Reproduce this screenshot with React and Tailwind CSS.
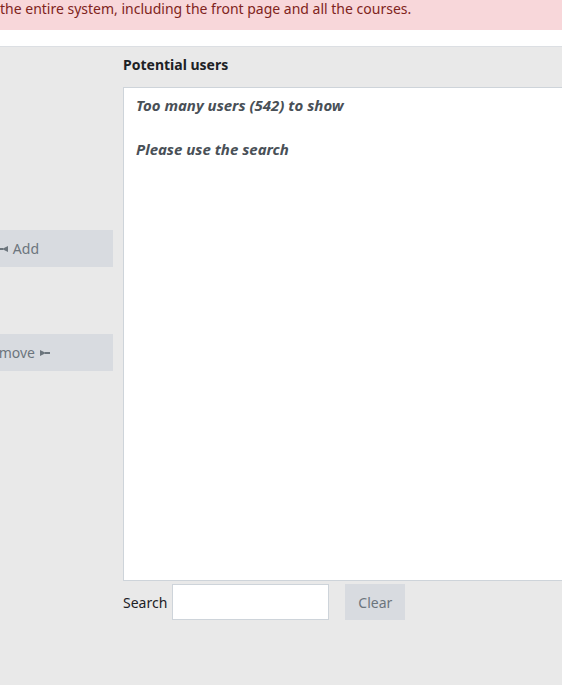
import React from "react";

const font = { fontFamily: '"Noto Sans", "Open Sans", Arial, sans-serif' };

function LeftArrow() {
  return (
    <svg width="10" height="8" viewBox="0 0 10 8" className="inline-block">
      <rect x="0" y="3" width="5" height="2" fill="#6c757d" />
      <polygon points="4,4 10,1 10,7" fill="#6c757d" />
    </svg>
  );
}

function RightArrow() {
  return (
    <svg width="10" height="8" viewBox="0 0 10 8" className="inline-block">
      <polygon points="0,1 6,4 0,7" fill="#6c757d" />
      <rect x="5" y="3" width="5" height="2" fill="#6c757d" />
    </svg>
  );
}

export default function App() {
  return (
    <div className="w-[562px] h-[685px] overflow-hidden bg-white" style={font}>
      {/* alert */}
      <div className="h-[30px] bg-[#f8d7da] text-[#7f2420] text-[14px] leading-[17px] whitespace-nowrap">
        the entire system, including the front page and all the courses.
      </div>
      <div className="h-[16px] bg-white" />

      {/* main area */}
      <div className="h-[639px] bg-[#e9e9e9] border-t border-[#dcdfe3] flex">
        {/* left column with buttons */}
        <div className="w-[123px] shrink-0 overflow-hidden">
          <div className="w-[198px] ml-[-85px] flex flex-col">
            <div className="h-[183px]" />
            <button className="h-[37px] w-full bg-[#d8dbe0] text-[#6c757d] text-[14px] flex items-center justify-end pr-[74px] gap-[5px]">
              <LeftArrow />
              <span>Add</span>
            </button>
            <div className="h-[67px]" />
            <button className="h-[37px] w-full bg-[#d8dbe0] text-[#6c757d] text-[14px] flex items-center justify-end pr-[63px] gap-[5px]">
              <span>Remove</span>
              <RightArrow />
            </button>
          </div>
        </div>

        {/* right column */}
        <div className="flex flex-col w-[460px] shrink-0">
          <div className="h-[40px] flex items-center pb-[6px] text-[14px] font-bold text-[#1d2125]">
            Potential users
          </div>
          <div className="h-[494px] bg-white border border-[#ced4da] px-[12px] pt-[7px] text-[15px] font-bold italic text-[#495057] leading-[20px]">
            <div>Too many users (542) to show</div>
            <div className="mt-[24px]">Please use the search</div>
          </div>
          <div className="flex items-center mt-[3px] h-[36px]">
            <span className="text-[14px] text-[#1d2125] mr-[5px]">Search</span>
            <input className="w-[157px] h-[36px] bg-white border border-[#ced4da] outline-none" />
            <button className="ml-[16px] w-[60px] h-[36px] bg-[#d8dbe0] text-[#6c757d] text-[14px]">
              Clear
            </button>
          </div>
        </div>
      </div>
    </div>
  );
}
